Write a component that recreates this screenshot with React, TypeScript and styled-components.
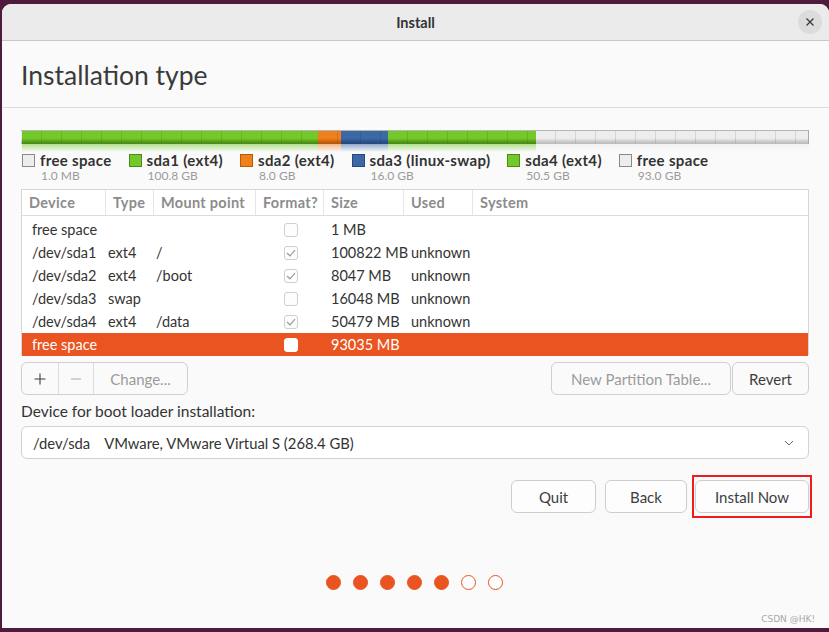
import { createGlobalStyle, styled } from 'styled-components';

const GlobalStyle = createGlobalStyle`
  html, body {
    margin: 0;
    padding: 0;
    background: #4e1b3f;
    overflow: hidden;
  }
  body {
    font-family: Lato, "Noto Sans", sans-serif;
    color: #3d3d3d;
  }
`;

type Part = {
  label: string;
  size: string;
  gb: number;
  color: string;
  dark: string;
};

const parts: Part[] = [
  { label: 'free space', size: '1.0 MB', gb: 0.2, color: '#ededed', dark: '#bdbdbd' },
  { label: 'sda1 (ext4)', size: '100.8 GB', gb: 100.8, color: '#73c92a', dark: '#4b8d14' },
  { label: 'sda2 (ext4)', size: '8.0 GB', gb: 8.0, color: '#f0801c', dark: '#b8590a' },
  { label: 'sda3 (linux-swap)', size: '16.0 GB', gb: 16.0, color: '#3d68a6', dark: '#244a80' },
  { label: 'sda4 (ext4)', size: '50.5 GB', gb: 50.5, color: '#73c92a', dark: '#4b8d14' },
  { label: 'free space', size: '93.0 GB', gb: 93.0, color: '#ededed', dark: '#bdbdbd' },
];

type Row = {
  device: string;
  type: string;
  mount: string;
  format: boolean;
  size: string;
  used: string;
  selected?: boolean;
};

const rows: Row[] = [
  { device: 'free space', type: '', mount: '', format: false, size: '1 MB', used: '' },
  { device: '/dev/sda1', type: 'ext4', mount: '/', format: true, size: '100822 MB', used: 'unknown' },
  { device: '/dev/sda2', type: 'ext4', mount: '/boot', format: true, size: '8047 MB', used: 'unknown' },
  { device: '/dev/sda3', type: 'swap', mount: '', format: false, size: '16048 MB', used: 'unknown' },
  { device: '/dev/sda4', type: 'ext4', mount: '/data', format: true, size: '50479 MB', used: 'unknown' },
  { device: 'free space', type: '', mount: '', format: false, size: '93035 MB', used: '', selected: true },
];

const COLS = '84px 48px 102px 68px 80px 69px 1fr';

export default function App() {
  return (
    <>
      <GlobalStyle />
      <Window>
        <TitleBar>
          <span />
          <Title>Install</Title>
          <CloseWrap>
            <CloseButton>
              <svg width="10" height="10" viewBox="0 0 10 10">
                <path d="M1.5 1.5 L8.5 8.5 M8.5 1.5 L1.5 8.5" stroke="#3a3a3a" strokeWidth="1.3" />
              </svg>
            </CloseButton>
          </CloseWrap>
        </TitleBar>
        <Body>
          <Heading>Installation type</Heading>
          <Main>
            <PartBar>
              {parts.map((p, i) => (
                <Segment key={i} $grow={p.gb}>
                  <SegBar $color={p.color} $dark={p.dark} />
                  <SegShine $color={p.color} />
                </Segment>
              ))}
            </PartBar>
            <Legend>
              {parts.map((p, i) => (
                <LegendItem key={i}>
                  <Swatch $color={p.color} $dark={p.dark} />
                  <LegendText>
                    <LegendLabel>{p.label}</LegendLabel>
                    <LegendSize>{p.size}</LegendSize>
                  </LegendText>
                </LegendItem>
              ))}
            </Legend>
            <Table>
              <HeadRow>
                <HeadCell>Device</HeadCell>
                <HeadCell>Type</HeadCell>
                <HeadCell>Mount point</HeadCell>
                <HeadCell>Format?</HeadCell>
                <HeadCell>Size</HeadCell>
                <HeadCell>Used</HeadCell>
                <HeadCell $last>System</HeadCell>
              </HeadRow>
              <RowsBox>
                {rows.map((r, i) => (
                  <DataRow key={i} $selected={r.selected}>
                    <DeviceCell>{r.device}</DeviceCell>
                    <TypeCell>{r.type}</TypeCell>
                    <TypeCell>{r.mount}</TypeCell>
                    <CheckCell>
                      <Check $selected={r.selected}>
                        {r.format && (
                          <svg width="10" height="8" viewBox="0 0 10 8">
                            <path d="M1 4 L4 6.8 L9 1.2" fill="none" stroke="#9a9a9a" strokeWidth="1.2" />
                          </svg>
                        )}
                      </Check>
                    </CheckCell>
                    <DataCell>{r.size}</DataCell>
                    <DataCell>{r.used}</DataCell>
                    <DataCell />
                  </DataRow>
                ))}
              </RowsBox>
            </Table>
            <Toolbar>
              <ButtonGroup>
                <GroupBtn $w={36}>
                  <svg width="12" height="12" viewBox="0 0 12 12">
                    <path d="M6 0.5 V11.5 M0.5 6 H11.5" stroke="#3d3d3d" strokeWidth="1.1" />
                  </svg>
                </GroupBtn>
                <GroupBtn $w={34}>
                  <svg width="10" height="2" viewBox="0 0 10 2">
                    <path d="M0 1 H10" stroke="#a8a8a8" strokeWidth="1.1" />
                  </svg>
                </GroupBtn>
                <GroupBtn $w={93} $dim>Change...</GroupBtn>
              </ButtonGroup>
              <RightTools>
                <ToolButton $w={180} $dim>New Partition Table...</ToolButton>
                <ToolButton $w={77}>Revert</ToolButton>
              </RightTools>
            </Toolbar>
            <FieldLabel>Device for boot loader installation:</FieldLabel>
            <Select>
              <SelectText>
                <span>/dev/sda</span>
                <span>VMware, VMware Virtual S (268.4 GB)</span>
              </SelectText>
              <svg width="10" height="6" viewBox="0 0 10 6">
                <path d="M1 1 L5 5 L9 1" fill="none" stroke="#6a6a6a" strokeWidth="1" />
              </svg>
            </Select>
            <Actions>
              <ActionButton $w={85}>Quit</ActionButton>
              <ActionButton $w={82}>Back</ActionButton>
              <Highlight>
                <ActionButton $w={114}>Install Now</ActionButton>
              </Highlight>
            </Actions>
          </Main>
          <Steps>
            {[0, 1, 2, 3, 4, 5, 6].map((i) => (
              <Dot key={i} $done={i < 5} />
            ))}
          </Steps>
          <Footer>CSDN @HK!</Footer>
        </Body>
      </Window>
    </>
  );
}

const Window = styled.div`
  margin: 4px 0 0 2px;
  width: 827px;
  height: 624px;
  border-radius: 9px 9px 0 0;
  overflow: hidden;
  background: #fafafa;
  display: flex;
  flex-direction: column;
`;

const TitleBar = styled.div`
  height: 36px;
  flex-shrink: 0;
  display: grid;
  grid-template-columns: 1fr auto 1fr;
  align-items: center;
  background: #ebebeb;
  border-bottom: 1px solid #c8c8c8;
`;

const Title = styled.div`
  font-weight: 700;
  font-size: 14.5px;
  color: #333;
`;

const CloseWrap = styled.div`
  display: flex;
  justify-content: flex-end;
  padding-right: 7px;
`;

const CloseButton = styled.div`
  width: 24px;
  height: 24px;
  border-radius: 50%;
  background: #dcdcdc;
  display: flex;
  align-items: center;
  justify-content: center;
`;

const Body = styled.div`
  flex: 1;
  display: flex;
  flex-direction: column;
`;

const Heading = styled.div`
  height: 67px;
  box-sizing: border-box;
  padding: 18px 0 0 19px;
  font-size: 26.5px;
  font-weight: 400;
  color: #3a3a3a;
  border-bottom: 1px solid #dedede;
`;

const Main = styled.div`
  padding: 22px 20px 0 19px;
  display: flex;
  flex-direction: column;
`;

const PartBar = styled.div`
  display: flex;
  height: 22px;
`;

const Segment = styled.div<{ $grow: number }>`
  flex: ${(p) => p.$grow} 1 0;
  display: flex;
  flex-direction: column;
  min-width: 1px;
  &:last-child > div:first-child {
    border-right: 1px solid #a8a8a8;
  }
`;

const SegBar = styled.div<{ $color: string; $dark: string }>`
  height: 12px;
  border-top: 1px solid #b5b5b5;
  border-bottom: 1px solid ${(p) => p.$dark};
  background:
    repeating-linear-gradient(90deg, transparent 0 19px, rgba(0, 0, 0, 0.1) 19px 20px),
    linear-gradient(${(p) => p.$color}, ${(p) => p.$color} 60%, ${(p) => p.$dark});
`;

const SegShine = styled.div<{ $color: string }>`
  height: 8px;
  background: linear-gradient(${(p) => p.$color}, rgba(250, 250, 250, 0));
  opacity: 0.55;
`;

const Legend = styled.div`
  display: flex;
  gap: 17px;
  padding-left: 1px;
  height: 37px;
`;

const LegendItem = styled.div`
  display: flex;
  align-items: flex-start;
  gap: 5px;
`;

const Swatch = styled.div<{ $color: string; $dark: string }>`
  width: 11px;
  height: 11px;
  margin-top: 2px;
  background: ${(p) => p.$color};
  border: 1px solid ${(p) => (p.$color === '#ededed' ? '#8a8a8a' : p.$dark)};
`;

const LegendText = styled.div`
  display: flex;
  flex-direction: column;
`;

const LegendLabel = styled.div`
  font-weight: 700;
  font-size: 15px;
  letter-spacing: 0.33px;
  line-height: 16px;
  color: #333;
`;

const LegendSize = styled.div`
  font-size: 12px;
  line-height: 16px;
  color: #9a9a9a;
  padding-left: 1px;
`;

const Table = styled.div`
  border: 1px solid #d6d6d6;
  background: #ffffff;
  height: 166px;
  box-sizing: border-box;
`;

const HeadRow = styled.div`
  display: grid;
  grid-template-columns: ${COLS};
  height: 25px;
  border-bottom: 1px solid #dcdcdc;
`;

const HeadCell = styled.div<{ $last?: boolean }>`
  display: flex;
  align-items: center;
  padding-left: 7px;
  font-weight: 700;
  font-size: 14.5px;
  letter-spacing: 0.3px;
  color: #8c8c8c;
  border-right: ${(p) => (p.$last ? 'none' : '1px solid #e6e6e6')};
`;

const RowsBox = styled.div`
  padding-top: 2px;
`;

const DataRow = styled.div<{ $selected?: boolean }>`
  display: grid;
  grid-template-columns: ${COLS};
  height: 23px;
  align-items: center;
  font-size: 14.5px;
  background: ${(p) => (p.$selected ? '#e95420' : 'transparent')};
  color: ${(p) => (p.$selected ? '#ffffff' : '#333')};
`;

const DataCell = styled.div`
  padding-left: 7px;
  white-space: nowrap;
`;

const DeviceCell = styled(DataCell)`
  padding-left: 10px;
`;

const TypeCell = styled(DataCell)`
  padding-left: 2px;
`;

const CheckCell = styled.div`
  display: flex;
  justify-content: center;
  padding-left: 2px;
`;

const Check = styled.div<{ $selected?: boolean }>`
  width: 14px;
  height: 14px;
  border-radius: 3px;
  box-sizing: border-box;
  border: 1px solid ${(p) => (p.$selected ? '#ffffff' : '#d0d0d0')};
  background: ${(p) => (p.$selected ? '#ffffff' : '#fdfdfd')};
  display: flex;
  align-items: center;
  justify-content: center;
`;

const Toolbar = styled.div`
  margin-top: 7px;
  display: flex;
  justify-content: space-between;
  height: 33px;
`;

const ButtonGroup = styled.div`
  display: flex;
  border: 1px solid #cfcfcf;
  border-radius: 6px;
  background: #fafafa;
  overflow: hidden;
`;

const GroupBtn = styled.div<{ $w: number; $dim?: boolean }>`
  width: ${(p) => p.$w}px;
  display: flex;
  align-items: center;
  justify-content: center;
  font-size: 15px;
  color: ${(p) => (p.$dim ? '#9b9b9b' : '#3d3d3d')};
  & + & {
    border-left: 1px solid #dcdcdc;
  }
`;

const RightTools = styled.div`
  display: flex;
  gap: 1px;
`;

const ToolButton = styled.div<{ $w: number; $dim?: boolean }>`
  width: ${(p) => p.$w}px;
  box-sizing: border-box;
  border: 1px solid #cfcfcf;
  border-radius: 6px;
  display: flex;
  align-items: center;
  justify-content: center;
  font-size: 15px;
  color: ${(p) => (p.$dim ? '#9b9b9b' : '#3d3d3d')};
  background: #fafafa;
`;

const FieldLabel = styled.div`
  margin-top: 7px;
  font-size: 15.5px;
  line-height: 18px;
  color: #333;
`;

const Select = styled.div`
  margin-top: 6px;
  height: 33px;
  box-sizing: border-box;
  border: 1px solid #d2d2d2;
  border-radius: 6px;
  background: #ffffff;
  display: flex;
  align-items: center;
  justify-content: space-between;
  padding: 0 14px 0 11px;
`;

const SelectText = styled.div`
  display: flex;
  gap: 14px;
  font-size: 14.8px;
  color: #333;
`;

const Actions = styled.div`
  margin-top: 16px;
  display: flex;
  justify-content: flex-end;
  align-items: center;
  gap: 9px;
  margin-right: -3px;
`;

const ActionButton = styled.div<{ $w: number }>`
  width: ${(p) => p.$w}px;
  height: 33px;
  box-sizing: border-box;
  border: 1px solid #cdcdcd;
  border-radius: 6px;
  background: #fdfdfd;
  display: flex;
  align-items: center;
  justify-content: center;
  font-size: 15px;
  color: #3d3d3d;
`;

const Highlight = styled.div`
  display: flex;
  flex: none;
  border: 2px solid #ee1c1c;
  padding: 3px 1px;
  margin-left: -4px;
`;

const Steps = styled.div`
  margin-top: 57px;
  display: flex;
  justify-content: center;
  gap: 12px;
  padding-right: 2px;
`;

const Dot = styled.div<{ $done: boolean }>`
  width: 15px;
  height: 15px;
  box-sizing: border-box;
  border-radius: 50%;
  background: ${(p) => (p.$done ? '#e95420' : '#ffffff')};
  border: 1.5px solid #e95420;
`;

const Footer = styled.div`
  margin-top: auto;
  padding: 0 14px 4px 0;
  text-align: right;
  font-family: "DejaVu Sans", sans-serif;
  font-size: 9px;
  color: #a8a8a8;
`;
